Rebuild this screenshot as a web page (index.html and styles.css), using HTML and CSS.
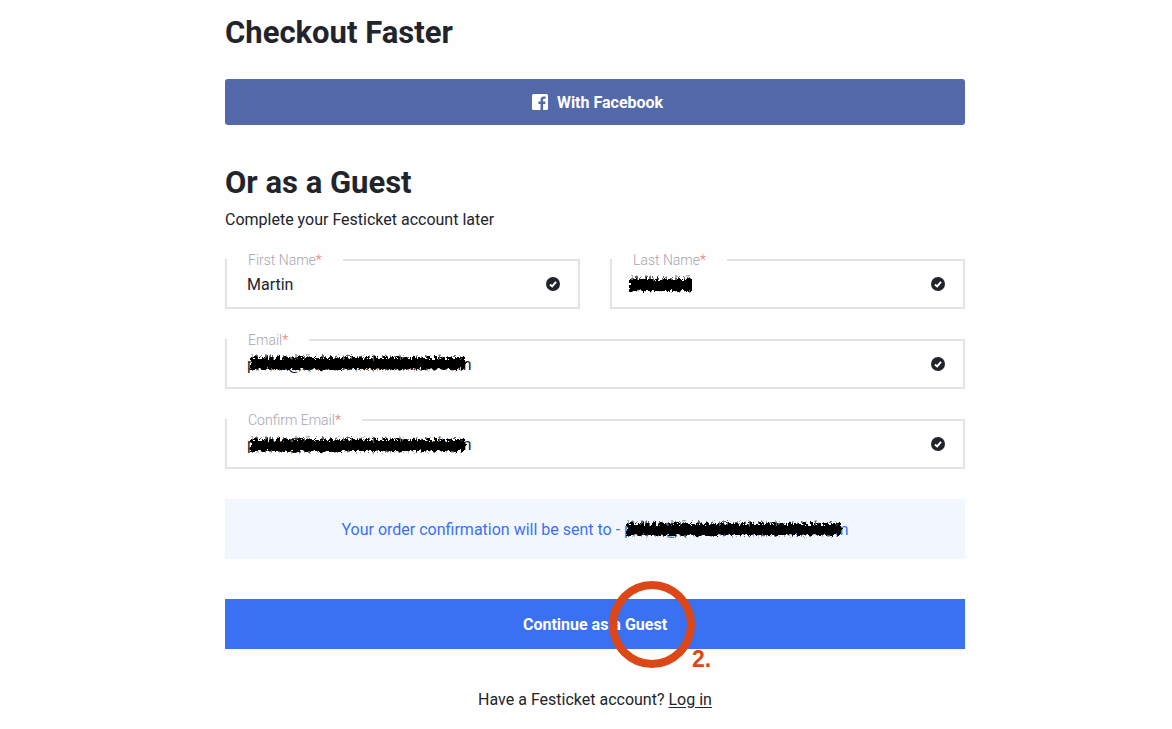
FILE: index.html
```html
<!DOCTYPE html>
<html lang="en">
<head>
<meta charset="utf-8">
<meta name="viewport" content="width=device-width, initial-scale=1">
<title>Checkout</title>
<link rel="stylesheet" href="styles.css">
</head>
<body>
<svg class="defs" aria-hidden="true">
  <defs>
    <filter id="rough" filterUnits="userSpaceOnUse" x="-4" y="-4" width="228" height="28" color-interpolation-filters="sRGB">
      <feTurbulence type="fractalNoise" baseFrequency="0.28" numOctaves="2" seed="7" result="n"/>
      <feDisplacementMap in="SourceGraphic" in2="n" scale="6" xChannelSelector="R" yChannelSelector="G"/>
      <feGaussianBlur stdDeviation="0.4"/>
    </filter>
    <symbol id="check" viewBox="0 0 14 14">
      <circle cx="7" cy="7" r="7" fill="#22242c"/>
      <path d="M4 7.4 6.2 9.4 10 4.8" fill="none" stroke="#fff" stroke-width="2"/>
    </symbol>
    <symbol id="scribble" viewBox="0 0 220 20">
      <g filter="url(#rough)" stroke="#000" fill="none">
        <path d="M4 10H216" stroke-width="10"/>
        <path d="M3 9H217" stroke-width="12" stroke-dasharray="2 1 4 2 1 1 3 1"/>
        <path d="M4 9H216" stroke-width="15" stroke-dasharray="1 3 2 2 1 4" stroke-opacity=".6"/>
      </g>
    </symbol>
    <symbol id="scribble-short" viewBox="0 0 70 20">
      <g filter="url(#rough)" stroke="#000" fill="none">
        <path d="M4 10H64" stroke-width="10"/>
        <path d="M2 10H65" stroke-width="12" stroke-dasharray="2 1 4 2 1 1 3 1"/>
        <path d="M4 9H64" stroke-width="15" stroke-dasharray="1 3 2 2 1 4" stroke-opacity=".6"/>
      </g>
    </symbol>
  </defs>
</svg>
<main class="checkout">
  <h1 class="title">Checkout Faster</h1>
  <button class="facebook" type="button">
    <svg class="facebook-icon" viewBox="0 0 16 16" aria-hidden="true"><path fill="#fff" fill-rule="evenodd" d="M1.5 0h13A1.5 1.5 0 0 1 16 1.5v13a1.5 1.5 0 0 1-1.5 1.5h-3.4V9.9h2.1l.3-2.5h-2.4V5.9c0-.7.3-1.1 1.2-1.1h1.3V2.6c-.4-.1-1-.1-1.8-.1-2 0-3.2 1.2-3.2 3.2v1.7H6.4v2.5h2.1V16h-7A1.5 1.5 0 0 1 0 14.5v-13A1.5 1.5 0 0 1 1.5 0z"/></svg>
    <span class="button-text">With Facebook</span>
  </button>
  <h2 class="title guest-title">Or as a Guest</h2>
  <p class="intro">Complete your Festicket account later</p>
  <form class="form">
    <div class="names">
      <fieldset class="field">
        <legend class="legend"><label for="first">First Name<span class="star">*</span></label></legend>
        <div class="row"><input class="input" id="first" type="text" value="Martin"><svg class="check" aria-hidden="true"><use href="#check"/></svg></div>
      </fieldset>
      <fieldset class="field">
        <legend class="legend"><label for="last">Last Name<span class="star">*</span></label></legend>
        <div class="row"><input class="input" id="last" type="text" value="xxxxxx"><svg class="scribble scribble-short" aria-hidden="true"><use href="#scribble-short"/></svg><svg class="check" aria-hidden="true"><use href="#check"/></svg></div>
      </fieldset>
    </div>
    <fieldset class="field">
      <legend class="legend"><label for="email">Email<span class="star">*</span></label></legend>
      <div class="row"><input class="input" id="email" type="text" value="pxxxx@xxxxxxxxxxxxxxxoooom"><svg class="scribble" aria-hidden="true"><use href="#scribble"/></svg><svg class="check" aria-hidden="true"><use href="#check"/></svg></div>
    </fieldset>
    <fieldset class="field">
      <legend class="legend"><label for="confirm">Confirm Email<span class="star">*</span></label></legend>
      <div class="row"><input class="input" id="confirm" type="text" value="pxxxx@xxxxxxxxxxxxxxxoooom"><svg class="scribble scribble-low" aria-hidden="true"><use href="#scribble"/></svg><svg class="check" aria-hidden="true"><use href="#check"/></svg></div>
    </fieldset>
    <p class="notice">Your order confirmation will be sent to -&nbsp;<span class="address">pxxxx@xxxxxxxxxxxxxxxoooom<svg class="scribble scribble-notice" aria-hidden="true"><use href="#scribble"/></svg></span></p>
    <div class="submit">
      <button class="continue" type="submit">Continue as a Guest</button>
      <span class="ring"></span>
      <span class="step">2.</span>
    </div>
  </form>
  <p class="login">Have a Festicket account? <a class="link" href="#">Log in</a></p>
</main>
</body>
</html>
```
FILE: styles.css
```css
* { box-sizing: border-box; }
body {
  margin: 0;
  padding: 0 16px 0 34px;
  background: #fefefe;
  color: #22242c;
  font: 16px/20px Roboto, "Liberation Sans", sans-serif;
}
.defs { position: absolute; width: 0; height: 0; }
.checkout { max-width: 740px; margin: 0 auto; padding: 13px 0 20px; }
.title { margin: 0; font-size: 31px; line-height: 40px; font-weight: 700; }
.facebook {
  display: flex; align-items: center; justify-content: center; gap: 9px;
  width: 100%; height: 46px; margin-top: 26px; padding: 0 0 0 5px;
  border: 0; border-radius: 3px;
  background: #5469aa; color: #fff; font: inherit; font-weight: 700;
}
.facebook-icon { width: 16px; height: 16px; }
.button-text { padding-top: 2px; }
.guest-title { margin-top: 38px; }
.intro { margin: 7px 0 22px; }
.form { display: flex; flex-direction: column; gap: 23px; }
.names { display: grid; grid-template-columns: 1fr 1fr; gap: 30px; }
.field { min-width: 0; margin: 0; padding: 0 0 7px; border: 2px solid #e2e2e8; }
.legend {
  padding: 0 21px; color: #a6a6b0;
  font-size: 14px; line-height: 16px; font-weight: 300;
}
.star { color: #e07a76; }
.row { position: relative; display: flex; align-items: center; padding: 0 18px 0 20px; }
.input {
  flex: 1; min-width: 0; height: 32px; padding: 0;
  border: 0; outline: 0; background: transparent; color: inherit; font: inherit;
}
.check { width: 14px; height: 14px; }
.scribble { position: absolute; left: 21px; top: 6px; width: 220px; height: 20px; }
.scribble-short { left: 16px; top: 7px; width: 70px; }
.scribble-low { top: 8px; }
.notice {
  margin: 7px 0 0; padding: 21px 20px 19px; background: #f2f7ff;
  color: #3a71f2; text-align: center;
}
.address { position: relative; }
.scribble-notice { left: 0; top: 0; }
.submit { position: relative; margin-top: 17px; }
.continue {
  display: block; width: 100%; height: 50px; padding: 2px 0 0; border: 0;
  background: #3a71f2; color: #fff; font: inherit; font-weight: 700;
}
.ring {
  position: absolute; left: calc(50% + 14px); top: -18px;
  width: 86px; height: 87px; border: 8px solid #dd4718; border-radius: 50%;
}
.step {
  position: absolute; left: calc(50% + 97px); top: 48px;
  color: #dd4718; font: bold 23px/24px "Liberation Sans", sans-serif;
}
.login { margin: 41px 0 0; text-align: center; }
.link { color: inherit; text-underline-offset: 2px; }
```
